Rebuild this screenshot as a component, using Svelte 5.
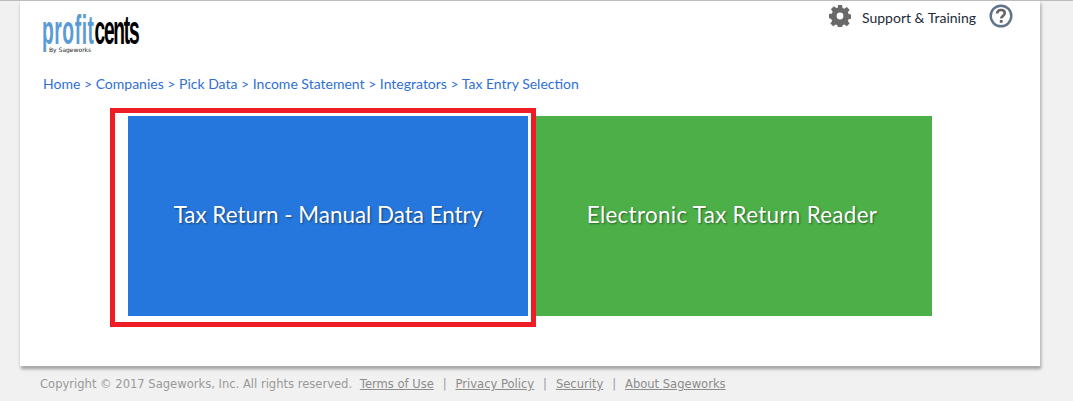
<script>
  const crumbs = ['Home', 'Companies', 'Pick Data', 'Income Statement', 'Integrators', 'Tax Entry Selection'];
  const footerLinks = ['Terms of Use', 'Privacy Policy', 'Security', 'About Sageworks'];
</script>

<div class="page">
  <div class="card">
    <header class="top">
      <div class="logo">
        <div class="wordmark"><div class="letters"><span class="profit">profit</span><span class="cents">cents</span></div></div>
        <div class="by">By Sageworks</div>
      </div>
      <div class="tools">
        <svg class="gear" width="22" height="22" viewBox="0 0 24 24" aria-hidden="true">
          <path fill="#696969" fill-rule="evenodd" d="M9.8 0h4.400l.6 3.300 1.900.8 2.700-1.900 3.100 3.100-1.900 2.700.8 1.900 3.300.6v4.400l-3.300.6-.8 1.900 1.900 2.700-3.100 3.100-2.700-1.900-1.900.8-.6 3.300H9.800l-.6-3.300-1.900-.8-2.700 1.900-3.100-3.100 1.900-2.700-.8-1.900L-.1 14.200V9.800l3.300-.6.8-1.900-1.900-2.700 3.100-3.100 2.700 1.900 1.900-.8zM12 8.300a3.700 3.700 0 1 0 0 7.400 3.700 3.700 0 0 0 0-7.400z"/>
        </svg>
        <span class="support">Support &amp; Training</span>
        <svg class="help" width="24" height="24" viewBox="0 0 24 24" aria-hidden="true">
          <circle cx="12" cy="12" r="10.300" fill="none" stroke="#5f7488" stroke-width="2.400"/>
          <path d="M8.100 9.500c.2-2.300 1.900-3.500 3.900-3.500 2.300 0 3.800 1.300 3.800 3.100 0 1.500-.9 2.200-2 3-1 .7-1.600 1.200-1.600 2.500" fill="none" stroke="#666" stroke-width="2.600"/>
          <rect x="10.800" y="16" width="2.800" height="2.800" fill="#666"/>
        </svg>
      </div>
    </header>

    <nav class="crumbs">
      {#each crumbs as c, i}
        <a href="#top">{c}</a>{#if i < crumbs.length - 1}{' > '}{/if}
      {/each}
    </nav>

    <div class="tiles">
      <div class="tile blue">Tax Return - Manual Data Entry</div>
      <div class="tile green">Electronic Tax Return Reader</div>
      <div class="highlight"></div>
    </div>
  </div>

  <footer class="foot">
    <span class="copy">Copyright © 2017 Sageworks, Inc. All rights reserved.</span>
    {#each footerLinks as l, i}
      <a href="#top">{l}</a>{#if i < footerLinks.length - 1}<span class="sep">|</span>{/if}
    {/each}
  </footer>
</div>

<style>
  :global(body) {
    margin: 0;
    background: #f1f1f1;
  }

  .page {
    height: 401px;
    overflow: hidden;
    border-top: 1px solid #bcbcbc;
    box-sizing: border-box;
  }

  .card {
    width: 1020px;
    height: 365px;
    margin-left: 20px;
    background: #fff;
    box-shadow: 0 0 2px #cfcfcf, 1px 3px 3px #9a9a9a;
    font-family: Lato, "Liberation Sans", sans-serif;
  }

  .top {
    display: flex;
    justify-content: space-between;
    height: 70px;
    padding: 0 27px 0 22px;
  }

  .logo {
    padding-top: 12px;
    width: 100px;
  }

  .wordmark {
    height: 34px;
    width: 100px;
  }

  .letters {
    font-family: "Liberation Sans", sans-serif;
    font-weight: 700;
    font-size: 40px;
    line-height: 34px;
    transform: scaleX(0.48);
    transform-origin: left top;
    white-space: nowrap;
  }

  .profit {
    color: #5b9bd5;
    letter-spacing: 1.2px;
  }

  .cents {
    color: #000;
    letter-spacing: -2.6px;
  }

  .by {
    font-family: "DejaVu Sans", sans-serif;
    font-size: 6px;
    line-height: 6px;
    color: #222;
    margin: 0 0 0 7px;
  }

  .tools {
    display: flex;
    align-items: flex-start;
    padding-top: 4px;
  }

  .gear {
    margin: 0 11px 0 1px;
  }

  .support {
    font-size: 14px;
    line-height: 26px;
    color: #222b3a;
    margin-right: 13px;
  }

  .help {
    margin-top: -1px;
  }

  .crumbs {
    height: 30px;
    padding: 3px 0 0 23px;
    box-sizing: border-box;
    font-size: 14px;
    line-height: 20px;
    color: #2f6fd6;
    white-space: pre;
  }

  .crumbs a {
    color: #2f6fd6;
    text-decoration: none;
  }

  .tiles {
    position: relative;
    display: flex;
    gap: 4px;
    margin: 15px 0 0 108px;
  }

  .tile {
    width: 400px;
    height: 200px;
    box-sizing: border-box;
    padding-bottom: 4px;
    display: flex;
    align-items: center;
    justify-content: center;
    color: #fff;
    font-size: 22.4px;
    text-shadow: 1px 1px 2px rgba(0, 0, 0, 0.45);
  }

  .blue {
    background: #2677dd;
  }

  .green {
    background: #4caf48;
    letter-spacing: 0.3px;
  }

  .highlight {
    position: absolute;
    left: -18px;
    top: -8px;
    width: 426px;
    height: 219px;
    border: 5px solid #ee1c25;
    box-sizing: border-box;
  }

  .foot {
    margin: 11px 0 0 40px;
    font-family: "DejaVu Sans", Verdana, sans-serif;
    font-size: 11.55px;
    line-height: 14px;
    color: #999;
    white-space: nowrap;
  }

  .copy {
    margin-right: 4px;
  }

  .foot a {
    color: #8c8c8c;
  }

  .sep {
    margin: 0 8.9px;
  }
</style>
